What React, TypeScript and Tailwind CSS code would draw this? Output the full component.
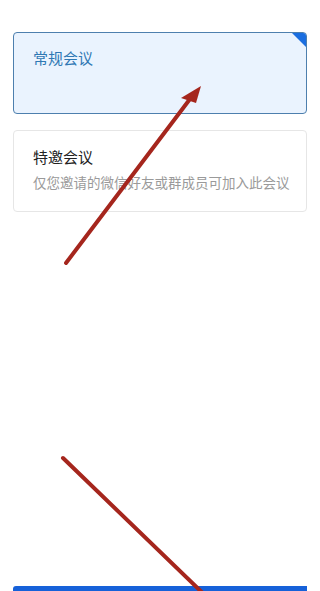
export default function App() {
  return (
    <div
      className="relative h-[591px] w-[308px] overflow-hidden bg-white"
      style={{ fontFamily: '"Noto Sans CJK SC", "Noto Sans", sans-serif' }}
    >
      <div className="flex h-full flex-col pl-[13px] pr-px pt-[32px]">
        {/* 常规会议 (selected) */}
        <div className="relative h-[82px] overflow-hidden rounded-[4px] border border-[#4d7fae] bg-[#eaf3fe] px-[19px] pt-[13px]">
          <div className="text-[15px] leading-[24px] text-[#2f78b4]">常规会议</div>
          <div className="absolute right-0 top-0 h-0 w-0 border-l-[14px] border-t-[14px] border-l-transparent border-t-[#1b6ee0]" />
        </div>

        {/* 特邀会议 */}
        <div className="mt-[16px] h-[82px] rounded-[4px] border border-[#e6e6e6] bg-white pl-[19px] pt-[14px]">
          <div className="text-[15px] leading-[24px] text-[#222]">特邀会议</div>
          <div className="mt-[3px] whitespace-nowrap text-[13.5px] leading-[20px] text-[#9a9a9a]">
            仅您邀请的微信好友或群成员可加入此会议
          </div>
        </div>

        {/* bottom button */}
        <div className="mt-auto h-[44px] translate-y-[39px] rounded-tl-[3px] bg-[#1661d9]" />
      </div>

      {/* annotation arrows */}
      <svg className="pointer-events-none absolute inset-0" width="308" height="591" viewBox="0 0 308 591">
        <line x1="66" y1="263" x2="193" y2="95" stroke="#a5261d" strokeWidth="4" strokeLinecap="round" />
        <polygon points="201,86 181,98 196,103" fill="#a5261d" />
        <line x1="63" y1="458" x2="212" y2="602" stroke="#a5261d" strokeWidth="4" strokeLinecap="round" />
      </svg>
    </div>
  );
}
